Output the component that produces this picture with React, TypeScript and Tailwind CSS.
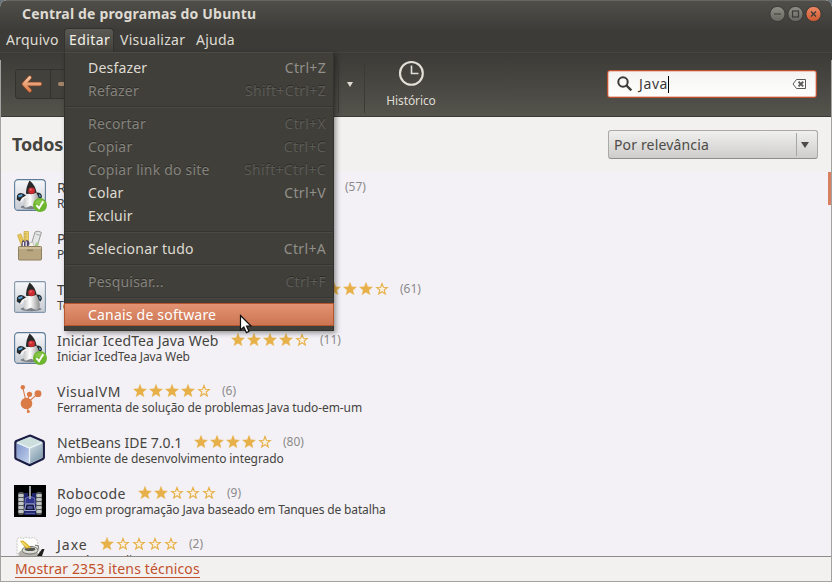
import React from "react";

const FONT = "font-['Noto_Sans','Open_Sans',sans-serif]";
const STAR =
  "M7 0.3 L8.76 4.77 L13.56 5.07 L9.85 8.13 L11.06 12.78 L7 10.2 L2.94 12.78 L4.15 8.13 L0.44 5.07 L5.24 4.77 Z";

function Stars({ value }: { value: number }) {
  return (
    <div className="flex h-[14px] gap-[2px]">
      {[0, 1, 2, 3, 4].map((i) => (
        <svg key={i} width="14" height="14" viewBox="0 0 14 14">
          {i < value ? (
            <path d={STAR} fill="#e7b049" stroke="#e7b049" strokeWidth="0.3" />
          ) : (
            <path
              d="M7 1.5 L8.4 5.3 L12.3 5.5 L9.2 8 L10.3 11.9 L7 9.7 L3.7 11.9 L4.8 8 L1.7 5.5 L5.6 5.3 Z"
              fill="#f8f0e0"
              stroke="#e7b049"
              strokeWidth="1.1"
            />
          )}
        </svg>
      ))}
    </div>
  );
}

function Duke({ checked }: { checked?: boolean }) {
  return (
    <svg width="34" height="34" viewBox="0 0 34 34">
      <defs>
        <linearGradient id="dukeBg" x1="0" y1="0" x2="0" y2="1">
          <stop offset="0" stopColor="#f7f8fa" />
          <stop offset="1" stopColor="#c6cbd2" />
        </linearGradient>
        <linearGradient id="dukeBody" x1="0" y1="0" x2="1" y2="0">
          <stop offset="0" stopColor="#c9c9c9" />
          <stop offset="0.4" stopColor="#ffffff" />
          <stop offset="1" stopColor="#8f8f8f" />
        </linearGradient>
      </defs>
      <rect x="0.6" y="0.6" width="30.8" height="30.8" rx={checked ? 3.5 : 1.5} fill="url(#dukeBg)" stroke={checked ? "#5f7d99" : "#8297ab"} strokeWidth="1.1" />
      <ellipse cx="17" cy="28" rx="10.5" ry="2.2" fill="#7d8288" />
      <path d="M3 16.5 Q5 13 9 14.5 L13 17 L11.5 20.5 L8.5 19.5 L6 22.5 L2.8 20.5 Z" fill="#22272a" />
      <path d="M4.2 16.2 L8.2 15 L8.6 17 L4.6 18.6 Z" fill="#5aa5d6" />
      <path d="M22 13.5 Q27.5 13 28 17.5 L26.5 20.5 L23.5 18.5 Z" fill="#22272a" />
      <path d="M24.8 14.8 L27.2 17 L25.6 18.4 Z" fill="#64a8d1" />
      <path d="M12.8 14 Q10 20 9.6 25.5 Q9.8 28.8 12.5 28.6 L17 26.8 L21.5 28.8 Q25.5 29 25.8 25 Q25.8 18.5 21.5 12.8 Z" fill="url(#dukeBody)" />
      <path d="M15.6 1.4 Q12.2 7 12 14.2 Q13 15.6 14.5 14.8 Q18 16 22.6 13.6 Q21.5 6.2 15.6 1.4 Z" fill="#2a2929" />
      <circle cx="17.6" cy="11.8" r="3.3" fill="#cc2d33" />
      <circle cx="16.7" cy="10.7" r="1.1" fill="#ea6264" />
      <path d="M12.3 17.5 Q8.5 19 7.2 22.2" fill="none" stroke="#f2f2f2" strokeWidth="1.9" strokeLinecap="round" />
      {checked && (
        <g>
          <circle cx="26" cy="26" r="7" fill="#6db52c" />
          <path d="M20.5 24 A6 6 0 0 1 31.5 24 Q26 27 20.5 24 Z" fill="#86c548" />
          <path d="M22.3 26.2 L25 29.2 L29.2 22.3" fill="none" stroke="#fff" strokeWidth="1.9" />
        </g>
      )}
    </svg>
  );
}

function ToolsIcon() {
  return (
    <svg width="34" height="34" viewBox="0 0 34 34">
      <path d="M10 1.5 H14.5 V15 H10 Z" fill="#ead06a" stroke="#c9a63a" strokeWidth="0.7" />
      <path d="M10.5 4 H12.5 M10.5 7 H12.5 M10.5 10 H12.5" stroke="#a88a2c" strokeWidth="0.7" />
      <path d="M3.5 5.2 L7 3.8 L11.5 16 H7.5 Z" fill="#e6c654" stroke="#c4a137" strokeWidth="0.6" />
      <path d="M21 2 Q24 0.2 27.4 2.4 L24.5 12 L22 17 H16.5 Z" fill="#e4e7e6" stroke="#8f928e" strokeWidth="0.9" />
      <path d="M21.8 4 L26.2 5.4" stroke="#a4a7a4" strokeWidth="0.9" />
      <path d="M7 17 L8 11.5 Q9.5 9 11 12 L12 10.5 Q13.5 9 15 11.5 L16.5 17 Z" fill="#51466b" />
      <path d="M9.4 12 V16.5 M12.2 11.5 V16.5" stroke="#f2eff5" strokeWidth="1.3" />
      <path d="M14.5 16.5 L16 12.5 L19 12 L20 16.5 Z" fill="#f3f3f0" stroke="#a9aaa5" strokeWidth="0.6" />
      <path d="M20.5 16.5 L22 12.5 L25 13 L24 16.5 Z" fill="#a9c98b" />
      <rect x="4.5" y="16.5" width="23" height="13.5" rx="0.8" fill="#b8a680" stroke="#90805e" />
      <path d="M5 17 H27 V19 H5 Z" fill="#cfc09d" />
      <path d="M13 19.5 H19 V21.3 H13 Z" fill="#94835f" />
    </svg>
  );
}

function VisualVmIcon() {
  return (
    <svg width="34" height="34" viewBox="0 0 34 34">
      <path d="M8.8 4.5 L12.5 20.5 L23.8 10.8 M15.5 11.5 L12.5 20.5 L14.2 28.6" stroke="#da7a46" strokeWidth="1.1" fill="none" />
      <g fill="#da7a46">
        <circle cx="8.8" cy="4.3" r="2.2" />
        <circle cx="15.5" cy="11.3" r="2.6" />
        <circle cx="24" cy="10.7" r="3.4" />
        <circle cx="12.5" cy="20.5" r="5.8" />
        <circle cx="14.3" cy="28.6" r="1.5" />
      </g>
    </svg>
  );
}

function NetBeansIcon() {
  return (
    <svg width="34" height="34" viewBox="0 0 34 34">
      <defs>
        <linearGradient id="nbL" x1="0" y1="0" x2="1" y2="1">
          <stop offset="0" stopColor="#7d94cc" />
          <stop offset="1" stopColor="#c5d3ec" />
        </linearGradient>
        <linearGradient id="nbR" x1="0" y1="0" x2="0.6" y2="1">
          <stop offset="0" stopColor="#d5e0e7" />
          <stop offset="1" stopColor="#7f9bac" />
        </linearGradient>
      </defs>
      <path d="M15.5 1.8 Q16 1.4 16.8 1.8 L28.8 7 Q29.8 7.6 29.8 8.6 V23.6 Q29.8 24.6 28.8 25 L16.6 30.8 Q15.5 31.2 14.6 30.8 L2.4 25 Q1.4 24.4 1.4 23.4 V8.6 Q1.4 7.6 2.4 7 Z" fill="#c7d3df" stroke="#1c1d45" strokeWidth="2.3" strokeLinejoin="round" />
      <path d="M2.8 8.8 L15.5 14 V29.5 L2.8 23.5 Z" fill="url(#nbL)" />
      <path d="M28.4 8.8 L15.5 14 V29.5 L28.4 23.5 Z" fill="url(#nbR)" />
      <path d="M15.5 3 L28.2 8.3 L15.5 14 L2.8 8.3 Z" fill="#cddfdd" />
      <path d="M3.2 8.9 L15.5 14 L27.8 8.9 M15.5 14 V28.6" stroke="#edf5f8" strokeWidth="1.2" fill="none" />
    </svg>
  );
}

function RobocodeIcon() {
  const treads = [10, 14, 18, 22, 26];
  return (
    <svg width="34" height="34" viewBox="0 0 34 34">
      <rect width="32" height="32" fill="#000" />
      <rect x="4" y="7" width="6" height="23" rx="2" fill="#55585a" />
      <rect x="22" y="7" width="6" height="23" rx="2" fill="#55585a" />
      {treads.map((t) => (
        <g key={t} fill="#c2c6c5">
          <rect x="4.3" y={t - 1} width="5.4" height="2.9" rx="1.2" />
          <rect x="22.3" y={t - 1} width="5.4" height="2.9" rx="1.2" />
        </g>
      ))}
      <path d="M10 8 H14 V11 H18 V8 H22 V30 H10 Z" fill="#20246a" />
      <path d="M11.5 13 Q16 10 20.5 13 L21 19 H11 Z" fill="#30368c" stroke="#747cb4" strokeWidth="0.9" />
      <path d="M12 19 H20 L21.5 25.5 H10.5 Z" fill="#131540" stroke="#a3abce" strokeWidth="1" />
      <path d="M13.5 21 H18.5 L19 24 H13 Z" fill="#4a518f" />
      <path d="M16 1 V14" stroke="#a9aeb4" strokeWidth="1.8" />
      <path d="M11 28.4 H21" stroke="#565f9e" strokeWidth="1.2" />
    </svg>
  );
}

function JaxeIcon() {
  return (
    <svg width="34" height="34" viewBox="0 0 34 34">
      <path d="M3 3 L6 1.5 L9 2.5 L12 1.2 L16 2.2 L20 1.4 L23 4 L24 8 L26 20 H3 Z" fill="#fdfdfc" stroke="#c8c8c4" strokeDasharray="2 1" />
      <path d="M4 17.5 Q9 12 20 13 L27 20 H5 Z" fill="#b5b2ac" />
      <ellipse cx="16" cy="14.2" rx="8" ry="3.8" fill="#dcdcd6" stroke="#73736d" />
      <ellipse cx="16" cy="13.2" rx="5.4" ry="1.8" fill="#55554f" />
      <path d="M6 5 L9 4.5 L13.5 8 L17 12 L12 12.5 L9 9 Z" fill="#dcb32c" />
      <path d="M8 6 L13.5 11" stroke="#f4de74" strokeWidth="1.3" />
      <path d="M21 9.5 Q26.5 9 23.5 14" fill="none" stroke="#84857e" strokeWidth="1.3" />
      <path d="M23 20 L28 13 L30.5 13 L28 20 Z" fill="#20201e" />
    </svg>
  );
}

type Program = { icon: React.ReactNode; name: string; cls: string; width: string; sub: string; subCls: string; stars?: number; count?: string };

const PROGRAMS: Program[] = [
  { icon: <Duke checked />, name: "Runtime do OpenJDK 6", cls: "", width: "w-[199px]", sub: "Runtime do OpenJDK Java", subCls: "", stars: 4, count: "(57)" },
  { icon: <ToolsIcon />, name: "Policy Tool", cls: "", width: "w-[100px]", sub: "Policy Tool", subCls: "" },
  { icon: <Duke />, name: "Tempo de execução OpenJDK 7", cls: "", width: "w-[254px]", sub: "Tempo de execução Java", subCls: "", stars: 4, count: "(61)" },
  { icon: <Duke checked />, name: "Iniciar IcedTea Java Web", cls: "tracking-[0.13px]", width: "w-[174px]", sub: "Iniciar IcedTea Java Web", subCls: "tracking-[-0.12px]", stars: 4, count: "(11)" },
  { icon: <VisualVmIcon />, name: "VisualVM", cls: "tracking-[0.5px]", width: "w-[76px]", sub: "Ferramenta de solução de problemas Java tudo-em-um", subCls: "tracking-[-0.1px]", stars: 4, count: "(6)" },
  { icon: <NetBeansIcon />, name: "NetBeans IDE 7.0.1", cls: "tracking-[0px]", width: "w-[137px]", sub: "Ambiente de desenvolvimento integrado", subCls: "tracking-[-0.09px]", stars: 4, count: "(80)" },
  { icon: <RobocodeIcon />, name: "Robocode", cls: "tracking-[0.35px]", width: "w-[81px]", sub: "Jogo em programação Java baseado em Tanques de batalha", subCls: "tracking-[-0.15px]", stars: 2, count: "(9)" },
  { icon: <JaxeIcon />, name: "Jaxe", cls: "tracking-[1px]", width: "w-[43px]", sub: "Não é um editor XML", subCls: "", stars: 1, count: "(2)" },
];

function ProgramRow({ app }: { app: Program }) {
  return (
    <div className="flex h-[51px] shrink-0 pt-[7px] pl-[13px]">
      <div className="h-[34px] w-[34px] shrink-0">{app.icon}</div>
      <div className="ml-[9px] flex flex-col whitespace-nowrap text-[#45443f]">
        <div className="flex h-[18px] items-center">
          <span className={`${app.width} ${app.cls} shrink-0 text-[14px] leading-[18px]`}>{app.name}</span>
          {app.stars !== undefined && (
            <>
              <div className="-mt-[3px]"><Stars value={app.stars} /></div>
              <span className="-mt-[3px] ml-[11px] text-[12px] text-[#8b8a8c]">{app.count}</span>
            </>
          )}
        </div>
        <span className={`${app.subCls} text-[12px] leading-[14px]`}>{app.sub}</span>
      </div>
    </div>
  );
}

type Item = { label: string; key?: string; off?: boolean; hot?: boolean } | null;
const MENU: Item[] = [
  { label: "Desfazer", key: "Ctrl+Z" },
  { label: "Refazer", key: "Shift+Ctrl+Z", off: true },
  null,
  { label: "Recortar", key: "Ctrl+X", off: true },
  { label: "Copiar", key: "Ctrl+C", off: true },
  { label: "Copiar link do site", key: "Shift+Ctrl+C", off: true },
  { label: "Colar", key: "Ctrl+V" },
  { label: "Excluir" },
  null,
  { label: "Selecionar tudo", key: "Ctrl+A" },
  null,
  { label: "Pesquisar...", key: "Ctrl+F", off: true },
  null,
  { label: "Canais de software", hot: true },
];

function EditMenu() {
  return (
    <div className="absolute top-[52px] left-[64px] flex h-[279px] w-[270px] flex-col border border-[#33322e] border-t-[#4b4a45] bg-[#403f3a] pt-[3px] text-[14px] leading-none shadow-[2px_2px_5px_rgba(0,0,0,0.4)]">
      {MENU.map((m, i) =>
        m === null ? (
          <div key={i} className="flex h-[10px] items-center">
            <div className="h-[2px] w-full border-t border-b border-t-[#363531] border-b-[#4a4944]" />
          </div>
        ) : (
          <div
            key={i}
            className={
              m.hot
                ? "-mx-px flex h-[23px] items-center border border-[#b5562f] bg-linear-to-b from-[#e39373] to-[#cc7552] pr-[7px] pl-[23px]"
                : "flex h-[23px] items-center justify-between pr-[7px] pl-[23px]"
            }
          >
            <span className={m.hot ? "tracking-[0.2px] text-white" : m.off ? "tracking-[0.2px] text-[#85837d] [text-shadow:0_-1px_#2d2c29]" : "tracking-[0.2px] text-[#dfdbd2]"}>{m.label}</span>
            {m.key && <span className={m.off ? "tracking-[0.33px] text-[#5d5c57] [text-shadow:0_-1px_#2d2c29]" : "tracking-[0.33px] text-[#92908a]"}>{m.key}</span>}
          </div>
        )
      )}
    </div>
  );
}

function WindowButtons() {
  return (
    <svg width="54" height="18" viewBox="0 0 54 18">
      <defs>
        <linearGradient id="wb" x1="0" y1="0" x2="0" y2="1">
          <stop offset="0" stopColor="#8f8e87" />
          <stop offset="1" stopColor="#66655f" />
        </linearGradient>
        <linearGradient id="wc" x1="0" y1="0" x2="0" y2="1">
          <stop offset="0" stopColor="#ee8a66" />
          <stop offset="1" stopColor="#cb5730" />
        </linearGradient>
      </defs>
      <circle cx="9.5" cy="9" r="7.6" fill="url(#wb)" stroke="#383733" strokeWidth="0.9" />
      <circle cx="27.5" cy="9" r="7.6" fill="url(#wb)" stroke="#383733" strokeWidth="0.9" />
      <circle cx="45.5" cy="9" r="7.6" fill="url(#wc)" stroke="#383733" strokeWidth="0.9" />
      <path d="M6 9 H13" stroke="#3c3b37" strokeWidth="1.2" />
      <rect x="24.5" y="6" width="6" height="6" fill="none" stroke="#3c3b37" strokeWidth="1.2" />
      <path d="M43 6.5 L48 11.5 M48 6.5 L43 11.5" stroke="#3c3b37" strokeWidth="1.3" />
    </svg>
  );
}

export default function App() {
  return (
    <div className="bg-[#69747b]">
      <div className={`relative flex h-[582px] w-[832px] flex-col overflow-hidden rounded-t-[7px] bg-[#f2f1f0] ${FONT}`}>
        <header className="flex h-[52px] shrink-0 flex-col border-t border-[#66655f] bg-linear-to-b from-[#4f4e49] to-[#3c3b37] to-60%">
          <div className="flex h-[27px] items-start justify-between pt-[4px] pr-[10px] pl-[22px]">
            <h1 className="pt-[2px] text-[14px] leading-[14px] font-bold tracking-[0.17px] text-[#dfdbd2]">Central de programas do Ubuntu</h1>
            <WindowButtons />
          </div>
          <nav className="flex h-[24px] text-[14px] leading-[23px] tracking-[0.25px] text-[#dfdbd2]">
            <span className="w-[64px] pl-[6px]">Arquivo</span>
            <span className="mr-[6px] w-[50px] rounded-t-[4px] border border-b-0 border-[#33322e] bg-linear-to-b from-[#5a5953] to-[#42413c] pl-[4px] leading-[21px] tracking-[0.4px] text-[#f3f1ea]">Editar</span>
            <span className="w-[76px]">Visualizar</span>
            <span>Ajuda</span>
          </nav>
        </header>
        <div className="flex h-[65px] shrink-0 items-start border-t border-b border-t-[#45443f] border-b-[#3b3a35] bg-linear-to-b from-[#3c3b37] to-[#54534c] pl-[15px]">
          <div className="mt-[16px] flex h-[30px] w-[70px] overflow-hidden rounded-[3px] border border-[#33322e] bg-[#42413c]">
            <div className="flex w-[35px] items-center justify-center border-r border-[#33322e] pr-[2px]">
              <svg width="22" height="18" viewBox="0 0 22 18">
                <defs>
                  <linearGradient id="backArrow" x1="0" y1="0" x2="0" y2="1">
                    <stop offset="0" stopColor="#f3c3a0" />
                    <stop offset="1" stopColor="#e2814f" />
                  </linearGradient>
                </defs>
                <path d="M8.8 2.5 L2.8 9 L8.8 15.5 M3.5 9 H19" fill="none" stroke="#8b492a" strokeWidth="4.4" strokeLinecap="round" strokeLinejoin="round" />
                <path d="M8.8 2.5 L2.8 9 L8.8 15.5 M3.5 9 H19" fill="none" stroke="url(#backArrow)" strokeWidth="2.8" strokeLinecap="round" strokeLinejoin="round" />
              </svg>
            </div>
            <div className="flex items-center pl-[7px]">
              <div className="h-[4px] w-[16px] rounded-[2px] bg-[#a48669]" />
            </div>
          </div>
          <div className="mt-[10px] ml-[253px] flex h-[50px] w-[27px] items-start justify-center border-r border-l border-[#3b3a36] pt-[19px] pr-[3px]">
            <svg width="6" height="5" viewBox="0 0 6 5"><path d="M0 0 H6 L3 5 Z" fill="#dfdbd2" /></svg>
          </div>
          <div className="ml-[21px] flex w-[50px] flex-col items-center pt-[7px]">
            <svg width="26" height="26" viewBox="0 0 26 26">
              <circle cx="13.4" cy="13.4" r="11.4" fill="none" stroke="#e2dfd7" strokeWidth="2.1" />
              <path d="M13.5 5.5 V13.5 H20.5" fill="none" stroke="#e2dfd7" strokeWidth="1.6" />
            </svg>
            <span className="mt-[7px] text-[12px] leading-[16px] tracking-[-0.1px] text-[#dfdbd2]">Histórico</span>
          </div>
          <div className="mt-[17px] ml-[171px] flex h-[28px] w-[210px] items-center rounded-[3px] border border-[#c0522f] bg-linear-to-b from-[#f4f3f2] to-white pl-[9px] shadow-[inset_0_0_0_1px_#ecc3b4]">
            <svg width="16" height="16" viewBox="0 0 16 16">
              <circle cx="6" cy="6" r="4.7" fill="none" stroke="#3c3b37" strokeWidth="2" />
              <path d="M9.5 9.5 L14.3 14.3" stroke="#3c3b37" strokeWidth="2.4" />
            </svg>
            <span className="ml-[6px] w-[29px] text-[14px] leading-none tracking-[0.6px] text-[#3c3b37]">Java</span>
            <div className="h-[17px] w-px bg-black" />
            <svg className="ml-[123px]" width="15" height="12" viewBox="0 0 15 12">
              <path d="M4.5 1.5 H13.5 V10.5 H4.5 L1 6 Z" fill="none" stroke="#5a5955" />
              <path d="M6.5 3.8 L11.2 8.4 M11.2 3.8 L6.5 8.4" stroke="#5a5955" strokeWidth="1.9" />
            </svg>
          </div>
        </div>
        <div className="flex h-[55px] shrink-0 items-start justify-between bg-[#f2f1f0] pt-[13px] pr-[14px] pl-[12px]">
          <h2 className="pt-[2px] text-[18px] leading-[24px] font-bold tracking-[-0.2px] text-[#45443f]">Todos os programas</h2>
          <div className="flex h-[29px] w-[210px] items-center rounded-[3px] border border-[#aaa9a6] border-b-[#8e8d8a] bg-linear-to-b from-[#f0f0ef] to-[#cecdcb] pl-[5px] text-[14px] text-[#4c4b47]">
            <span className="flex-1 leading-none tracking-[0.15px]">Por relevância</span>
            <div className="flex h-[23px] w-[21px] items-center justify-center border-l border-[#a7a6a3] pt-px pr-[4px]">
              <svg width="8" height="6" viewBox="0 0 8 6"><path d="M0 0 H8 L4 6 Z" fill="#4c4b47" /></svg>
            </div>
          </div>
        </div>
        <main className="flex h-[384px] shrink-0 justify-between overflow-hidden bg-[#f3f1f5]">
          <div className="flex flex-col pl-px">
            {PROGRAMS.map((a) => (
              <ProgramRow key={a.name} app={a} />
            ))}
          </div>
          <div className="h-[33px] w-[4px] bg-[#d98061]" />
        </main>
        <footer className="flex flex-1 items-start border-t border-b border-t-[#8f8e8c] border-b-[#a3a2a0] pl-[15px]">
          <a className="mt-[3px] border-b border-[#c2502b] text-[14px] leading-[17px] tracking-[0.15px] text-[#c2502b]">Mostrar 2353 itens técnicos</a>
        </footer>
        <EditMenu />
        <svg className="absolute top-[314px] left-[239px]" width="14" height="20" viewBox="0 0 14 20">
          <path d="M1.5 1.5 V16 L4.8 13 L7.4 18.6 L10 17.4 L7.6 12 H12 Z" fill="#fff" stroke="#111" strokeWidth="1.2" />
        </svg>
        <div className="absolute top-[60px] bottom-0 left-0 w-px bg-[#a3a2a0]" />
        <div className="absolute top-[60px] right-0 bottom-0 w-px bg-[#a3a2a0]" />
      </div>
    </div>
  );
}
